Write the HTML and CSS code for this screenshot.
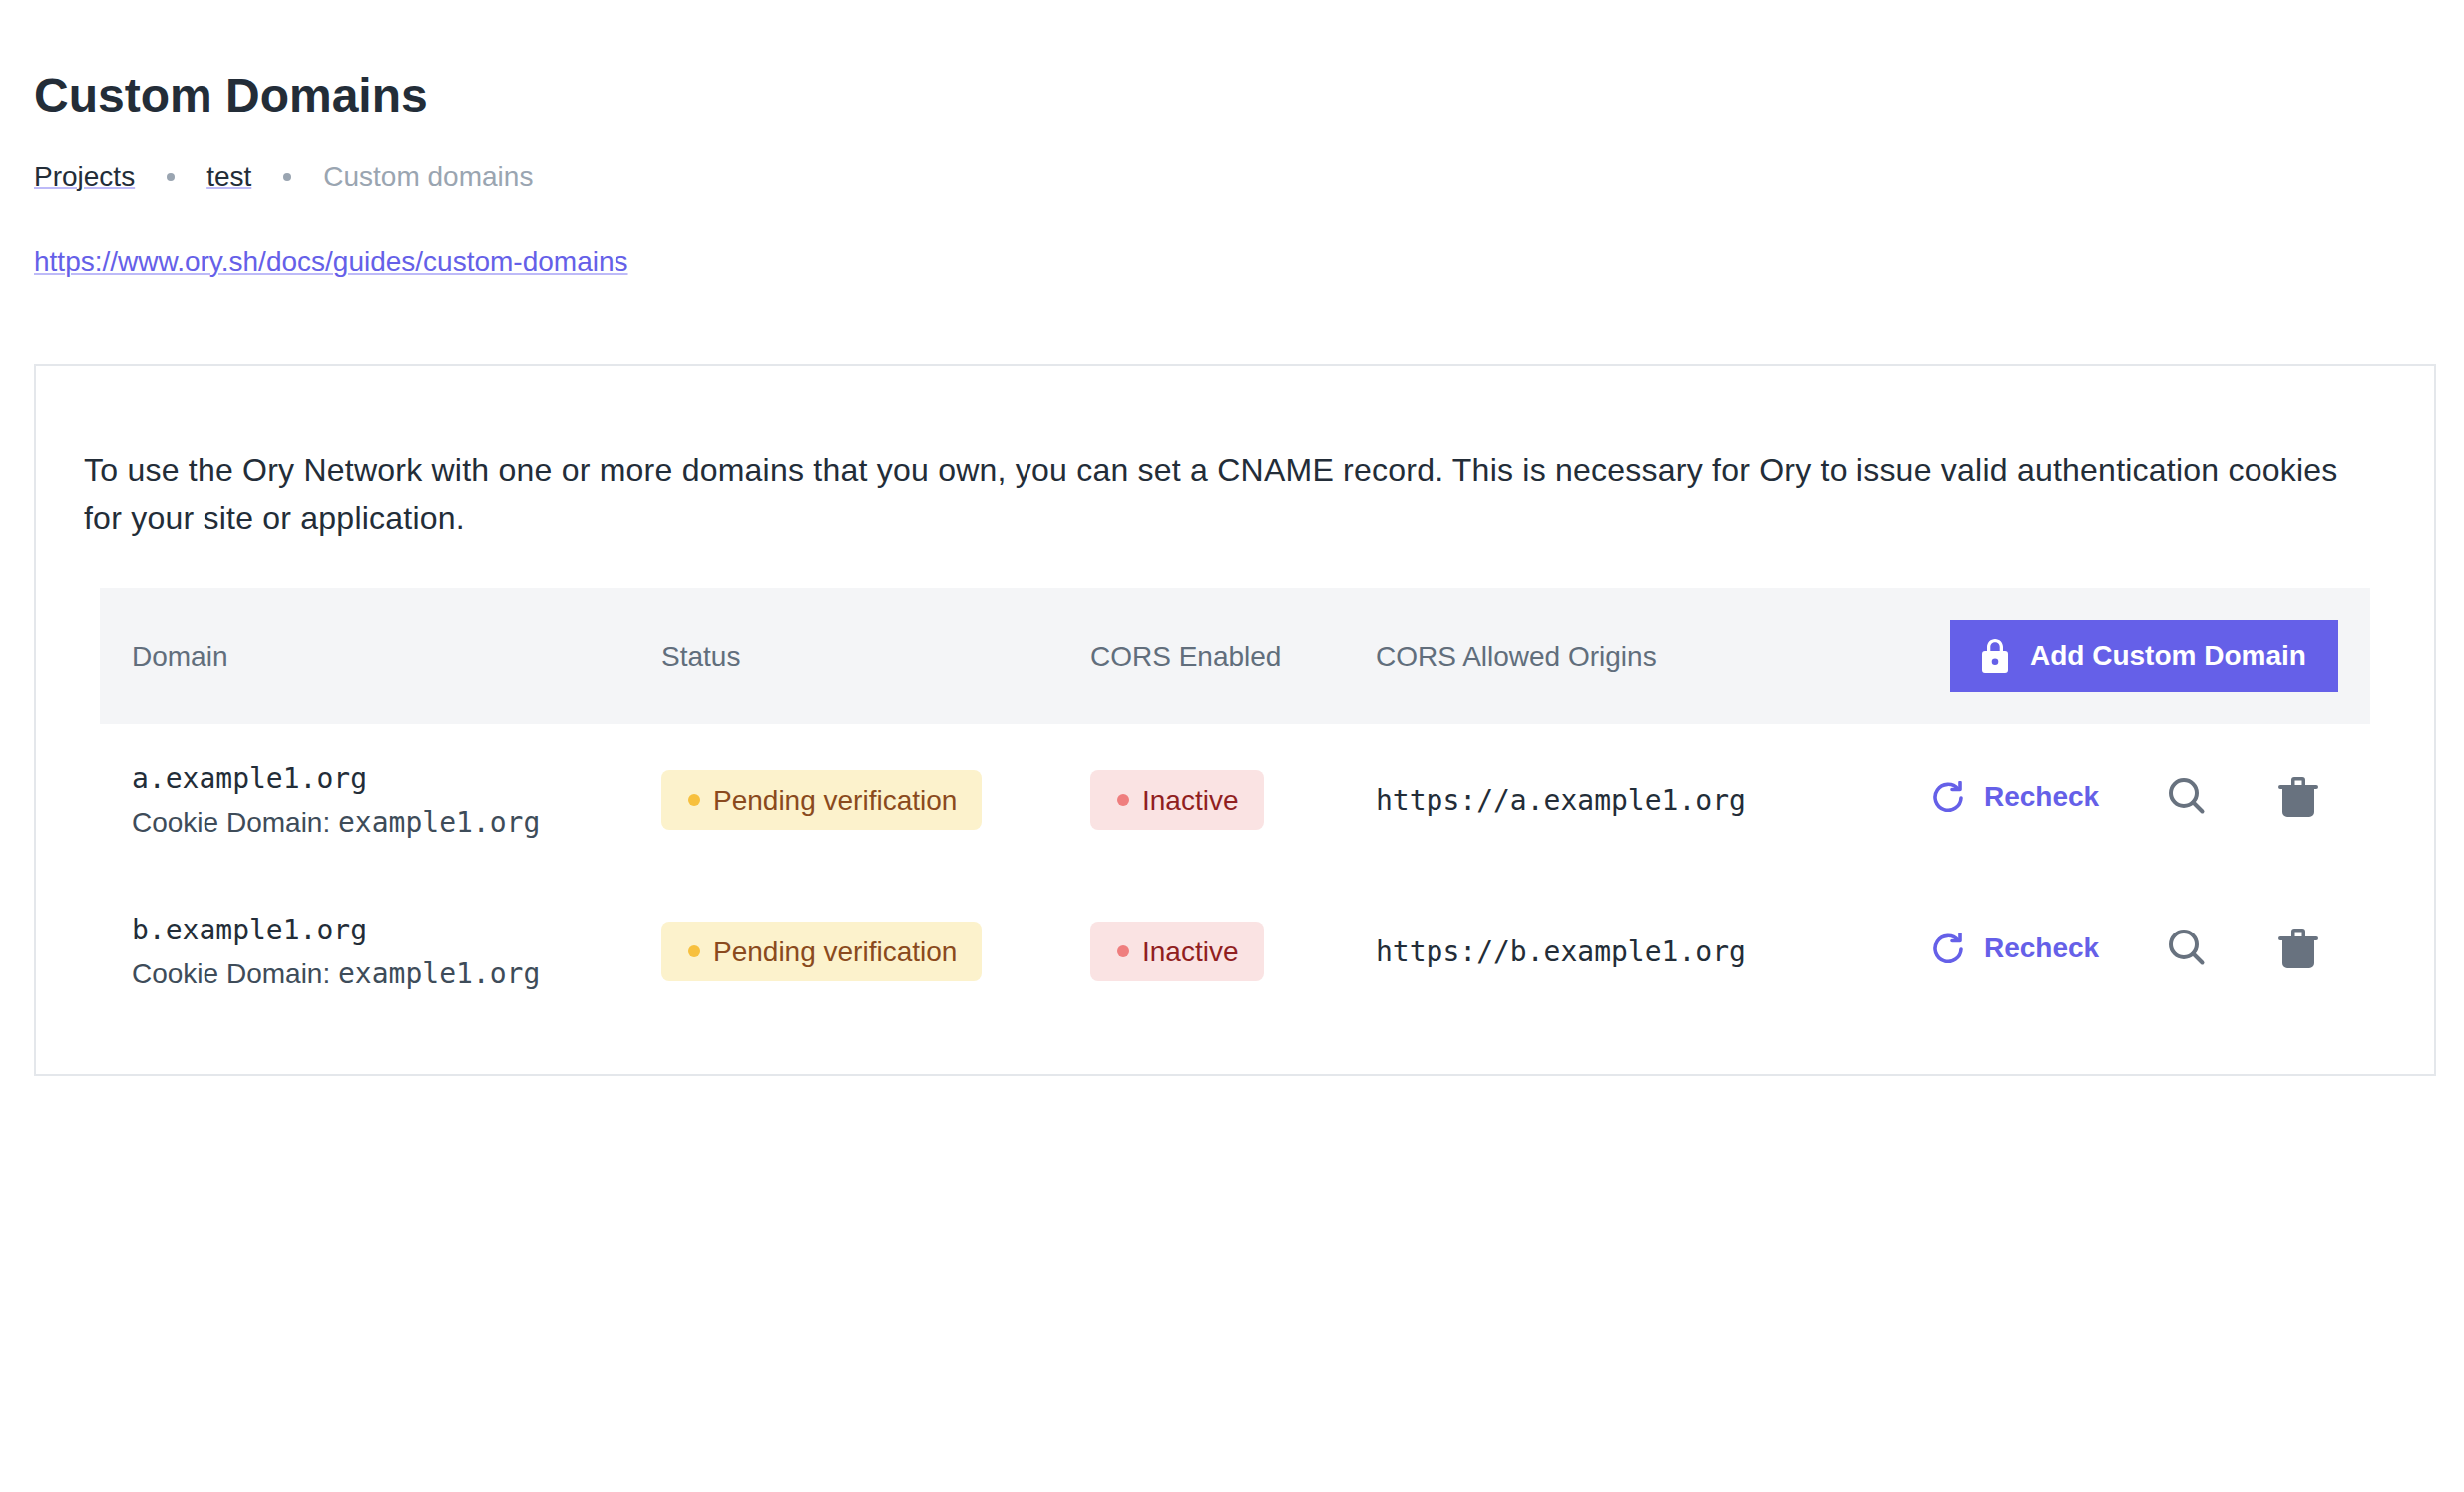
FILE: index.html
```html
<!DOCTYPE html>
<html lang="en">
<head>
<meta charset="utf-8">
<title>Custom Domains</title>
<link rel="stylesheet" href="styles.css">
</head>
<body>
<main class="page">
  <h1 class="title">Custom Domains</h1>
  <nav class="crumbs">
    <a class="crumb-link" href="#">Projects</a>
    <span class="crumb-dot"></span>
    <a class="crumb-link" href="#">test</a>
    <span class="crumb-dot"></span>
    <span class="crumb-current">Custom domains</span>
  </nav>
  <p class="docs"><a href="#">https://www.ory.sh/docs/guides/custom-domains</a></p>
  <section class="card">
    <p class="intro">To use the Ory Network with one or more domains that you own, you can set a CNAME record. This is necessary for Ory to issue valid authentication cookies for your site or application.</p>
    <div class="table">
      <div class="row head">
        <div class="cell txt">Domain</div>
        <div class="cell txt">Status</div>
        <div class="cell txt">CORS Enabled</div>
        <div class="cell txt">CORS Allowed Origins</div>
        <div class="cell cell-end">
          <button class="add-btn" type="button">
            <svg class="ic-lock" viewBox="0 0 26 34"><path fill="#fff" fill-rule="evenodd" d="M13 0C8.500 0 5 3.600 5 8v4H3a3 3 0 0 0-3 3v16a3 3 0 0 0 3 3h20a3 3 0 0 0 3-3V15a3 3 0 0 0-3-3h-2V8C21 3.600 17.500 0 13 0ZM8.300 12V8C8.300 5.300 10.400 3.300 13 3.300S17.700 5.300 17.700 8v4ZM13 19.400a3.300 3.300 0 1 1 0 6.600 3.300 3.300 0 0 1 0-6.600Z"/></svg>
            Add Custom Domain
          </button>
        </div>
      </div>
      <div class="row">
        <div class="cell txt"><div class="mono">a.example1.org</div><div class="cookie">Cookie Domain: <span class="mono-sub">example1.org</span></div></div>
        <div class="cell"><span class="badge warn"><i class="dot"></i>Pending verification</span></div>
        <div class="cell"><span class="badge off"><i class="dot"></i>Inactive</span></div>
        <div class="cell txt mono">https://a.example1.org</div>
        <div class="cell actions">
          <a class="recheck" href="#"><svg class="ic-re" viewBox="0 0 31 31"><path d="M26 8A13 13 0 1 0 29 17" fill="none" stroke="#6560e8" stroke-width="3.600" stroke-linecap="round"/><path d="M28 1.500V8.500H20" fill="none" stroke="#6560e8" stroke-width="3.600" stroke-linecap="round" stroke-linejoin="round"/></svg>Recheck</a>
          <svg class="ic-search" viewBox="0 0 37 37"><circle cx="15" cy="15" r="13" fill="none" stroke="#68727f" stroke-width="4"/><path d="M24.500 24.500l9 9" stroke="#68727f" stroke-width="4" stroke-linecap="round"/></svg>
          <svg class="ic-trash" viewBox="0 0 40 40"><path fill="#68727f" fill-rule="evenodd" d="M13 3a3 3 0 0 1 3-3h8a3 3 0 0 1 3 3v5h11a2 2 0 0 1 0 4h-2v23a5 5 0 0 1-5 5H9a5 5 0 0 1-5-5V12H2a2 2 0 0 1 0-4h11Zm3.500.5V8h7V3.500Z"/></svg>
        </div>
      </div>
      <div class="row">
        <div class="cell txt"><div class="mono">b.example1.org</div><div class="cookie">Cookie Domain: <span class="mono-sub">example1.org</span></div></div>
        <div class="cell"><span class="badge warn"><i class="dot"></i>Pending verification</span></div>
        <div class="cell"><span class="badge off"><i class="dot"></i>Inactive</span></div>
        <div class="cell txt mono">https://b.example1.org</div>
        <div class="cell actions">
          <a class="recheck" href="#"><svg class="ic-re" viewBox="0 0 31 31"><path d="M26 8A13 13 0 1 0 29 17" fill="none" stroke="#6560e8" stroke-width="3.600" stroke-linecap="round"/><path d="M28 1.500V8.500H20" fill="none" stroke="#6560e8" stroke-width="3.600" stroke-linecap="round" stroke-linejoin="round"/></svg>Recheck</a>
          <svg class="ic-search" viewBox="0 0 37 37"><circle cx="15" cy="15" r="13" fill="none" stroke="#68727f" stroke-width="4"/><path d="M24.500 24.500l9 9" stroke="#68727f" stroke-width="4" stroke-linecap="round"/></svg>
          <svg class="ic-trash" viewBox="0 0 40 40"><path fill="#68727f" fill-rule="evenodd" d="M13 3a3 3 0 0 1 3-3h8a3 3 0 0 1 3 3v5h11a2 2 0 0 1 0 4h-2v23a5 5 0 0 1-5 5H9a5 5 0 0 1-5-5V12H2a2 2 0 0 1 0-4h11Zm3.500.5V8h7V3.500Z"/></svg>
        </div>
      </div>
    </div>
  </section>
</main>
</body>
</html>
```
FILE: styles.css
```css
* { box-sizing: border-box; }
html, body { margin: 0; background: #fff; }
body { font-family: "Liberation Sans", Arial, sans-serif; color: #232d38; }
.page { padding: 64px 28px 0 34px; }
.title { margin: 0; font-size: 48px; line-height: 64px; font-weight: 700; color: #232d38; }
.crumbs { display: flex; align-items: center; margin-top: 29px; height: 40px; font-size: 28px; }
.crumb-link { color: #232d38; text-decoration: underline; text-decoration-color: #bdbaf8; text-decoration-thickness: 2px; text-underline-offset: 2px; }
.crumb-dot { width: 8px; height: 8px; border-radius: 50%; background: #9aa5b1; margin: 0 32px; }
.crumb-current { color: #9aa5b1; }
.docs { margin: 46px 0 0; font-size: 28px; line-height: 40px; }
.docs a { color: #6560e8; text-decoration: underline; text-decoration-color: #bdbaf8; text-decoration-thickness: 2px; text-underline-offset: 2px; }
.card { margin-top: 82px; border: 2px solid #e4e7eb; padding: 80px 64px 48px 48px; height: 714px; }
.intro { margin: 0 0 47px; font-size: 32px; line-height: 48px; letter-spacing: 0.23px; color: #232d38; }
.table { margin-left: 16px; }
.row { display: grid; grid-template-columns: 531px 430px 286px 558px 1fr; height: 152px; align-items: center; font-size: 28px; }
.row.head { height: 136px; background: #f4f5f7; color: #616e7c; }
.cell { padding-left: 32px; }
.txt { padding-top: 2px; }
.cell-end { display: flex; justify-content: flex-end; padding: 0 32px 0 0; }
.add-btn { display: flex; align-items: center; width: 389px; height: 72px; border: 0; padding: 0 0 0 32px; background: #6560e8; color: #fff; font: 700 28px/40px "Liberation Sans", Arial, sans-serif; }
.ic-lock { width: 26px; height: 34px; margin-right: 22px; flex: none; }
.mono { font-family: "DejaVu Sans Mono", monospace; font-size: 28px; line-height: 44px; color: #232d38; }
.cookie { line-height: 44px; color: #3e4c59; }
.mono-sub { font-family: "DejaVu Sans Mono", monospace; }
.badge { display: inline-flex; align-items: center; height: 60px; padding: 2px 25px 0 27px; border-radius: 8px; }
.dot { width: 12px; height: 12px; border-radius: 50%; margin: -2px 13px 0 0; }
.warn { background: #fcf2cc; color: #8a4a1d; }
.warn .dot { background: #f7c03e; }
.off { background: #fae3e3; color: #911f1f; }
.off .dot { background: #ef7e7e; }
.actions { display: flex; align-items: center; margin-top: -7px; }
.recheck { display: flex; align-items: center; width: 237px; color: #6560e8; font-weight: 700; text-decoration: none; }
.ic-re { width: 31px; height: 31px; margin-right: 21px; flex: none; }
.ic-search { width: 37px; height: 37px; flex: none; margin-right: 73px; }
.ic-trash { width: 40px; height: 40px; flex: none; }
```
